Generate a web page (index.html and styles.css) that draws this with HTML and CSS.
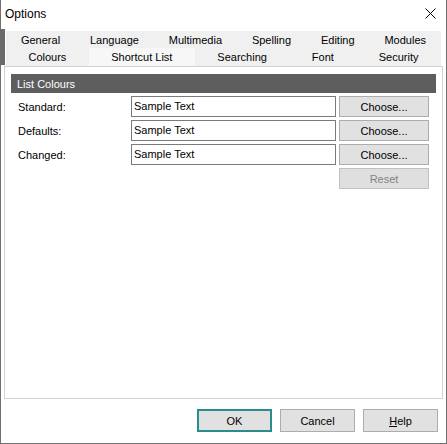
FILE: index.html
```html
<!DOCTYPE html>
<html>
<head>
<meta charset="utf-8">
<link rel="stylesheet" href="styles.css">
</head>
<body>
<div class="window">
  <div class="edge-block"></div>
  <div class="titlebar">
    <span class="title">Options</span>
    <svg class="close" width="11" height="11" viewBox="0 0 11 11"><path d="M0.5 0.5 L10.5 10.5 M10.5 0.5 L0.5 10.5" stroke="#000" stroke-width="1" fill="none"/></svg>
  </div>
  <div class="tabstrip">
    <div class="tabrow row1">
      <div class="tab">General</div>
      <div class="tab">Language</div>
      <div class="tab">Multimedia</div>
      <div class="tab">Spelling</div>
      <div class="tab">Editing</div>
      <div class="tab">Modules</div>
    </div>
    <div class="tabrow row2">
      <div class="tab">Colours</div>
      <div class="tab hover">Shortcut List</div>
      <div class="tab">Searching</div>
      <div class="tab">Font</div>
      <div class="tab">Security</div>
    </div>
  </div>
  <div class="panel">
    <div class="header">List Colours</div>
    <div class="grid">
      <div class="label">Standard:</div>
      <div class="field">Sample Text</div>
      <div class="btn">Choose...</div>
      <div class="label">Defaults:</div>
      <div class="field">Sample Text</div>
      <div class="btn">Choose...</div>
      <div class="label">Changed:</div>
      <div class="field">Sample Text</div>
      <div class="btn">Choose...</div>
      <div class="btn disabled reset">Reset</div>
    </div>
  </div>
  <div class="footer">
    <div class="dbtn ok">OK</div>
    <div class="dbtn">Cancel</div>
    <div class="dbtn"><u>H</u>elp</div>
  </div>
</div>
</body>
</html>
```
FILE: styles.css
```css
html, body {
  margin: 0;
  padding: 0;
  background: #fff;
}
body {
  font-family: "Liberation Sans", Arial, sans-serif;
  font-size: 11px;
  color: #000;
}
.window {
  position: relative;
  width: 447px;
  height: 444px;
  box-sizing: border-box;
  border: 1px solid #707070;
  border-top: none;
  background: #fff;
  display: flex;
  flex-direction: column;
}
.edge-block {
  position: absolute;
  left: -1px;
  top: 29px;
  width: 5px;
  height: 36px;
  background: #6b6b6b;
}
.titlebar {
  height: 27px;
  display: flex;
  align-items: center;
  padding-left: 4px;
  padding-right: 10px;
}
.title {
  font-size: 12px;
}
.close {
  margin-left: auto;
  display: block;
}
.tabstrip {
  margin: 4px 5px 0 5px;
  background: #f0f0f0;
}
.tabrow {
  display: flex;
}
.row1 { height: 17px; }
.row2 { height: 18px; }
.tab {
  flex: 1 1 auto;
  display: flex;
  align-items: center;
  justify-content: center;
  white-space: nowrap;
}
.row2 .tab { padding-bottom: 1px; }
.tab.hover {
  background: #f7f7f7;
}
.panel {
  margin: 0 3px;
  height: 333px;
  box-sizing: border-box;
  border: 1px solid #d2d2d2;
  padding: 7px 6px 0 6px;
}
.header {
  height: 19px;
  background: #5e5e5e;
  color: #fff;
  display: flex;
  align-items: center;
  padding-left: 6px;
  font-size: 11px;
}
.grid {
  margin-top: 3px;
  display: grid;
  grid-template-columns: 110px 205px 90px;
  column-gap: 3px;
  row-gap: 3px;
  grid-auto-rows: 21px;
  padding-left: 7px;
}
.label {
  display: flex;
  align-items: center;
}
.field {
  box-sizing: border-box;
  border: 1px solid #7a7a7a;
  display: flex;
  align-items: center;
  padding-left: 2px;
  padding-bottom: 1px;
}
.btn {
  box-sizing: border-box;
  border: 1px solid #adadad;
  background: #e1e1e1;
  display: flex;
  align-items: center;
  justify-content: center;
}
.reset {
  grid-column: 3;
}
.btn.disabled {
  background: #e0dfdf;
  border-color: #c2c0c0;
  color: #838383;
}
.footer {
  display: flex;
  justify-content: flex-end;
  gap: 8px;
  margin-top: 10px;
  margin-right: 8px;
}
.dbtn {
  width: 75px;
  height: 23px;
  box-sizing: border-box;
  border: 1px solid #adadad;
  background: #e1e1e1;
  display: flex;
  align-items: center;
  justify-content: center;
}
.dbtn.ok {
  border: 2px solid #2b8c8c;
}
```
